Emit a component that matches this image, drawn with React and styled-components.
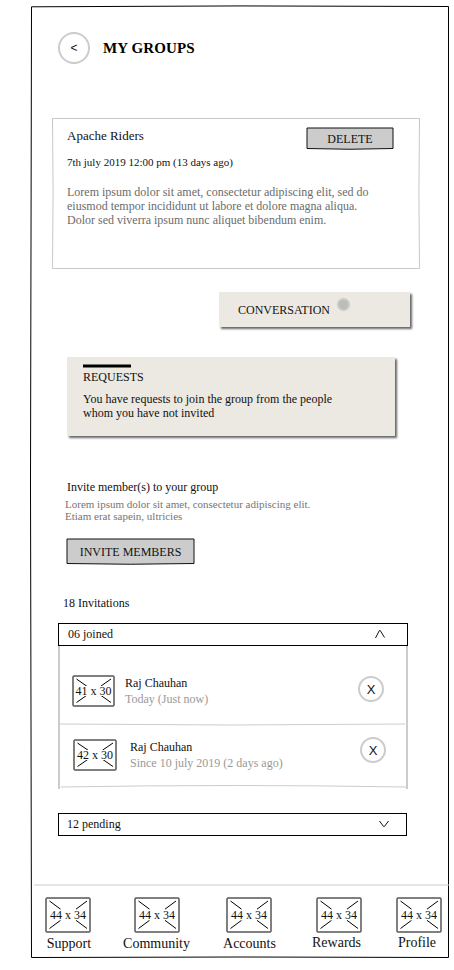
import React from 'react';
import styled, { createGlobalStyle } from 'styled-components';

const GlobalStyle = createGlobalStyle`
  *, *::before, *::after { box-sizing: border-box; }
  body {
    margin: 0;
    background: #fff;
    color: #111;
    font: 12px/14px "Liberation Serif", "Times New Roman", serif;
  }
  h1, h2, h3, p { margin: 0; font-weight: normal; }
  button { font: inherit; color: inherit; cursor: pointer; }
`;

const Screen = styled.main`
  position: relative;
  width: 418px;
  height: 952px;
  margin: 6px 0 0 31px;
  display: flex;
  flex-direction: column;
  align-items: flex-start;

  > * { flex-shrink: 0; }
`;

/* Hand-drawn outline that lies behind the content of its box */
const Sketch = styled.svg`
  position: absolute;
  inset: 0;
  z-index: -1;
  overflow: visible;
  pointer-events: none;
`;

const Header = styled.header`
  display: flex;
  align-items: center;
  gap: 13px;
  padding: 26px 0 0 27px;
`;

const RoundButton = styled.button`
  flex: none;
  width: ${(p) => p.$size}px;
  height: ${(p) => p.$size}px;
  padding: 0;
  border: 2px solid #ccc;
  border-radius: 50%;
  background: #fff;
  font: ${(p) => p.$font || 13}px/15px "Liberation Sans", Arial, sans-serif;
  display: flex;
  align-items: center;
  justify-content: center;
`;

const Title = styled.h1`
  font-size: 15px;
  line-height: 17px;
  font-weight: bold;
  letter-spacing: 0.1px;
  color: #000;
`;

const GroupCard = styled.section`
  position: relative;
  width: 368px;
  height: 151px;
  margin: 54px 0 0 21px;
  padding: 9px 26px 0 15px;
`;

const CardTop = styled.div`
  display: flex;
  justify-content: space-between;
  align-items: flex-start;
  height: 29px;
`;

const GroupName = styled.h2`
  font-size: 13px;
  line-height: 15px;
  margin-top: 1px;
`;

const GroupDate = styled.p`
  font-size: 11px;
  line-height: 13px;
  margin-bottom: 16px;
`;

const GroupText = styled.p`
  color: #6b6b6b;
  white-space: nowrap;
`;

const BoxButton = styled.button`
  position: relative;
  z-index: 0;
  width: ${(p) => p.$width}px;
  height: ${(p) => p.$height}px;
  padding: 0;
  border: 0;
  background: none;
  white-space: nowrap;
`;

const Conversation = styled.button`
  display: flex;
  align-items: flex-start;
  gap: 7px;
  width: 191px;
  height: 35px;
  margin: 23px 0 0 188px;
  padding: 6px 0 0 19px;
  border: 0;
  background: #ece9e2;
  box-shadow: 2px 2px 2px rgba(0, 0, 0, 0.6);
`;

const ConversationLabel = styled.span`
  margin-top: 5px;
`;

const Dot = styled.span`
  width: 13px;
  height: 13px;
  border: 2px solid #cacac8;
  border-radius: 50%;
  background: #bcbcbb;
`;

const Requests = styled.section`
  width: 328px;
  height: 79px;
  margin: 30px 0 0 36px;
  padding: 7px 0 0 16px;
  background: #ece9e2;
  box-shadow: 2px 2px 2px rgba(0, 0, 0, 0.6);
`;

const Accent = styled.svg`
  display: block;
  margin-bottom: 2px;
`;

const RequestsTitle = styled.h2`
  font-size: 12px;
  margin-bottom: 8px;
`;

const Invite = styled.section`
  margin: 44px 0 0 34px;
`;

const InviteTitle = styled.h2`
  font-size: 12px;
  padding-left: 2px;
  margin-bottom: 4px;
`;

const InviteText = styled.p`
  color: #757575;
  font-size: 11px;
  line-height: 12px;
  margin-bottom: 16px;
`;

const InviteAction = styled.div`
  display: flex;
  padding-left: 1px;
`;

const Count = styled.h2`
  font-size: 12px;
  margin: 31px 0 13px 32px;
`;

const Bar = styled.button`
  display: flex;
  align-items: center;
  justify-content: space-between;
  width: ${(p) => p.$width}px;
  height: 23px;
  margin-left: 27px;
  padding: 0 ${(p) => p.$right}px 1px ${(p) => p.$left}px;
  border: 1px solid #000;
  background: #fff;
`;

const Panel = styled.div`
  width: 350px;
  height: 143px;
  margin-left: 27px;
  border: solid #ccc;
  border-width: 0 2px;
`;

const Member = styled.article`
  position: relative;
  display: flex;
  align-items: flex-start;
  height: ${(p) => p.$height}px;
  padding: ${(p) => p.$pad};
`;

const MemberText = styled.div`
  flex: 1;
  padding-left: ${(p) => p.$left}px;
  line-height: 16px;
`;

const When = styled.p`
  color: #999;
`;

const CloseSlot = styled.div`
  margin-top: ${(p) => p.$top}px;
`;

const Divider = styled.svg`
  position: absolute;
  left: 0;
  bottom: 0;
  overflow: visible;
`;

const PendingGap = styled.div`
  margin-top: 24px;
`;

const Footer = styled.nav`
  display: flex;
  width: 415px;
  height: 74px;
  margin: 48px 0 0 3px;
  padding-top: 11px;
  border-top: 2px solid rgba(204, 204, 204, 0.5);
`;

const Tab = styled.div`
  flex: none;
  width: 68px;
  margin-left: ${(p) => p.$gap}px;
  display: flex;
  flex-direction: column;
  align-items: center;
`;

const TabLabel = styled.span`
  font-size: 14px;
  line-height: 16px;
  white-space: nowrap;
  margin-top: ${(p) => p.$top}px;
  margin-left: ${(p) => p.$shift}px;
`;

const Frame = styled.div`
  position: relative;
  flex: none;
  display: flex;
  align-items: center;
  justify-content: center;
  width: ${(p) => p.$w + 2}px;
  height: ${(p) => p.$h + 2}px;
`;

const Size = styled.span`
  background: #fff;
  white-space: nowrap;
  line-height: 10px;
`;

function Placeholder({ w, h }) {
  const dx = w * 0.25;
  const dy = h * 0.24;
  const right = w - 2;
  const bottom = h - 2.5;
  return (
    <Frame $w={w} $h={h}>
      <Sketch width={w + 2} height={h + 2} fill="none" stroke="#000">
        <rect x="1" y="1" width={w} height={h} rx="0.5" />
        <path
          d={`M4.5 4l${dx} ${dy}M${right} 4l${-dx} ${dy}M4.5 ${bottom}l${dx} ${-dy}M${right} ${bottom}l${-dx} ${-dy}`}
        />
      </Sketch>
      <Size>{`${w} x ${h}`}</Size>
    </Frame>
  );
}

function Chevron({ up }) {
  return (
    <svg width="10" height="8" fill="none" stroke="#111">
      <path d={up ? 'M0.5 8L4.4 0.5H5.2L9.5 7.5' : 'M0.5 1L4.6 6.5H5.4L9.5 1'} />
    </svg>
  );
}

const tabs = [
  { label: 'Support', gap: 0, shift: 2, top: 3 },
  { label: 'Community', gap: 21, shift: -1, top: 3 },
  { label: 'Accounts', gap: 24, shift: 1, top: 3 },
  { label: 'Rewards', gap: 22, shift: -5, top: 2 },
  { label: 'Profile', gap: 12, shift: -4, top: 2 },
];

export default function App() {
  return (
    <>
      <GlobalStyle />
      <Screen>
        <Sketch width="418" height="952" fill="none" stroke="#000">
          <path d="M0.5 0.8Q209 -0.8 417.5 0.5V951.5Q209 950.5 0.5 951.5Q-1.5 476 0.5 0.8Z" />
        </Sketch>

        <Header>
          <RoundButton $size={32} $font={12} aria-label="Back">&lt;</RoundButton>
          <Title>MY GROUPS</Title>
        </Header>

        <GroupCard>
          <Sketch width="368" height="151" fill="none" stroke="#c8c8c8">
            <path d="M0.5 0.5H367.5Q366.3 76 367.5 150.5H0.5Q1.7 76 0.5 0.5Z" />
          </Sketch>
          <CardTop>
            <GroupName>Apache Riders</GroupName>
            <BoxButton $width={88} $height={23}>
              <Sketch width="88" height="23" fill="#ccc" stroke="#111">
                <path d="M1 1H87V21.5Q44 23 1 21.5Z" />
              </Sketch>
              DELETE
            </BoxButton>
          </CardTop>
          <GroupDate>7th july 2019 12:00 pm (13 days ago)</GroupDate>
          <GroupText>
            Lorem ipsum dolor sit amet, consectetur adipiscing elit, sed do<br />
            eiusmod tempor incididunt ut labore et dolore magna aliqua.<br />
            Dolor sed viverra ipsum nunc aliquet bibendum enim.
          </GroupText>
        </GroupCard>

        <Conversation>
          <ConversationLabel>CONVERSATION</ConversationLabel>
          <Dot />
        </Conversation>

        <Requests>
          <Accent width="48" height="4">
            <rect y="0.5" width="48" height="3" />
          </Accent>
          <RequestsTitle>REQUESTS</RequestsTitle>
          <p>
            You have requests to join the group from the people<br />
            whom you have not invited
          </p>
        </Requests>

        <Invite>
          <InviteTitle>Invite member(s) to your group</InviteTitle>
          <InviteText>
            Lorem ipsum dolor sit amet, consectetur adipiscing elit.<br />
            Etiam erat sapein, ultricies
          </InviteText>
          <InviteAction>
            <BoxButton $width={129} $height={27}>
              <Sketch width="129" height="27" fill="#ccc" stroke="#111">
                <path d="M1 1H128V25.5Q64 27 1 25.5Z" />
              </Sketch>
              INVITE MEMBERS
            </BoxButton>
          </InviteAction>
        </Invite>

        <Count>18 Invitations</Count>

        <Bar $width={350} $left={9} $right={22}>
          <span>06 joined</span>
          <Chevron up />
        </Bar>
        <Panel>
          <Member $height={79} $pad="29px 22px 0 12px">
            <Placeholder w={41} h={30} />
            <MemberText $left={10}>
              <p>Raj Chauhan</p>
              <When>Today (Just now)</When>
            </MemberText>
            <CloseSlot $top={1}>
              <RoundButton $size={26} aria-label="Remove">X</RoundButton>
            </CloseSlot>
            <Divider width="345" height="2" fill="none" stroke="#ccc">
              <path d="M0 1Q172 3 345 1" />
            </Divider>
          </Member>
          <Member $height={62} $pad="14px 20px 0 13px">
            <Placeholder w={42} h={30} />
            <MemberText $left={13}>
              <p>Raj Chauhan</p>
              <When>Since 10 july 2019 (2 days ago)</When>
            </MemberText>
            <CloseSlot $top={-2}>
              <RoundButton $size={26} aria-label="Remove">X</RoundButton>
            </CloseSlot>
            <Divider width="346" height="2" fill="none" stroke="#ccc">
              <path d="M1 2Q172 -1 346 2" />
            </Divider>
          </Member>
        </Panel>

        <PendingGap>
          <Bar $width={349} $left={8} $right={17}>
            <span>12 pending</span>
            <Chevron />
          </Bar>
        </PendingGap>

        <Footer>
          {tabs.map((t) => (
            <Tab key={t.label} $gap={t.gap}>
              <Placeholder w={44} h={34} />
              <TabLabel $shift={t.shift} $top={t.top}>{t.label}</TabLabel>
            </Tab>
          ))}
        </Footer>
      </Screen>
    </>
  );
}
